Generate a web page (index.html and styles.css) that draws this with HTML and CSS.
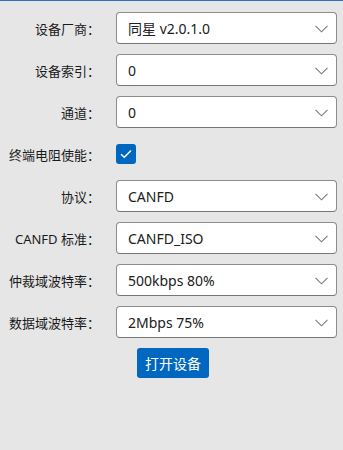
FILE: index.html
```html
<!DOCTYPE html>
<html lang="zh">
<head>
<meta charset="utf-8">
<link rel="stylesheet" href="styles.css">
</head>
<body>
<div class="page">
  <div class="form">
    <div class="label">设备厂商：</div>
    <div class="select"><span>同星 v2.0.1.0</span><svg class="chev" width="13" height="8" viewBox="0 0 13 8"><path d="M0.5 0.8 L6.5 6.8 L12.5 0.8" fill="none" stroke="#7a7a7a" stroke-width="1.1"/></svg></div>

    <div class="label">设备索引：</div>
    <div class="select"><span>0</span><svg class="chev" width="13" height="8" viewBox="0 0 13 8"><path d="M0.5 0.8 L6.5 6.8 L12.5 0.8" fill="none" stroke="#7a7a7a" stroke-width="1.1"/></svg></div>

    <div class="label">通道：</div>
    <div class="select"><span>0</span><svg class="chev" width="13" height="8" viewBox="0 0 13 8"><path d="M0.5 0.8 L6.5 6.8 L12.5 0.8" fill="none" stroke="#7a7a7a" stroke-width="1.1"/></svg></div>

    <div class="label">终端电阻使能：</div>
    <div class="checkcell"><div class="checkbox"><svg width="12" height="10" viewBox="0 0 12 10"><path d="M1 5.2 L4.3 8.3 L11 1.5" fill="none" stroke="#fff" stroke-width="1.4"/></svg></div></div>

    <div class="label">协议：</div>
    <div class="select"><span>CANFD</span><svg class="chev" width="13" height="8" viewBox="0 0 13 8"><path d="M0.5 0.8 L6.5 6.8 L12.5 0.8" fill="none" stroke="#7a7a7a" stroke-width="1.1"/></svg></div>

    <div class="label">CANFD 标准：</div>
    <div class="select"><span>CANFD_ISO</span><svg class="chev" width="13" height="8" viewBox="0 0 13 8"><path d="M0.5 0.8 L6.5 6.8 L12.5 0.8" fill="none" stroke="#7a7a7a" stroke-width="1.1"/></svg></div>

    <div class="label">仲裁域波特率：</div>
    <div class="select"><span>500kbps 80%</span><svg class="chev" width="13" height="8" viewBox="0 0 13 8"><path d="M0.5 0.8 L6.5 6.8 L12.5 0.8" fill="none" stroke="#7a7a7a" stroke-width="1.1"/></svg></div>

    <div class="label">数据域波特率：</div>
    <div class="select"><span>2Mbps 75%</span><svg class="chev" width="13" height="8" viewBox="0 0 13 8"><path d="M0.5 0.8 L6.5 6.8 L12.5 0.8" fill="none" stroke="#7a7a7a" stroke-width="1.1"/></svg></div>
  </div>
  <div class="actions">
    <button class="btn">打开设备</button>
  </div>
</div>
</body>
</html>
```
FILE: styles.css
```css
html, body {
  margin: 0;
  padding: 0;
  background: #e6e6e6;
  height: 100%;
}
body {
  font-family: "Noto Sans", "Noto Sans CJK SC", sans-serif;
  color: #1a1a1a;
  border-top: 1px solid #2a72c0;
  box-sizing: border-box;
}
.page {
  padding-top: 11px;
}
.form {
  display: grid;
  grid-template-columns: 100px 221px;
  grid-auto-rows: 32px;
  column-gap: 16px;
  row-gap: 10px;
}
.label {
  font-size: 13px;
  display: flex;
  align-items: center;
  justify-content: flex-end;
  white-space: nowrap;
  font-family: "Noto Sans", "Noto Sans CJK SC", sans-serif;
}
.select {
  box-sizing: border-box;
  background: #fff;
  border: 1px solid #8c8c8c;
  border-bottom-color: #767676;
  border-radius: 4px;
  display: flex;
  align-items: center;
  justify-content: space-between;
  padding: 0 8px 0 11px;
  font-size: 14px;
  color: #202020;
  font-family: "Noto Sans", "Noto Sans CJK SC", sans-serif;
}
.chev {
  display: block;
  margin-top: 1px;
}
.checkcell {
  display: flex;
  align-items: center;
}
.checkbox {
  width: 20px;
  height: 20px;
  border-radius: 3px;
  background: #0067c0;
  display: flex;
  align-items: center;
  justify-content: center;
}
.checkbox svg { display: block; }
.actions {
  display: flex;
  justify-content: center;
  padding-left: 3px;
  margin-top: 10px;
}
.btn {
  width: 72px;
  height: 30px;
  border: none;
  border-radius: 3px;
  background: #0067c0;
  color: #fff;
  font-size: 14px;
  font-family: "Noto Sans CJK SC", sans-serif;
  padding: 0;
}
```
